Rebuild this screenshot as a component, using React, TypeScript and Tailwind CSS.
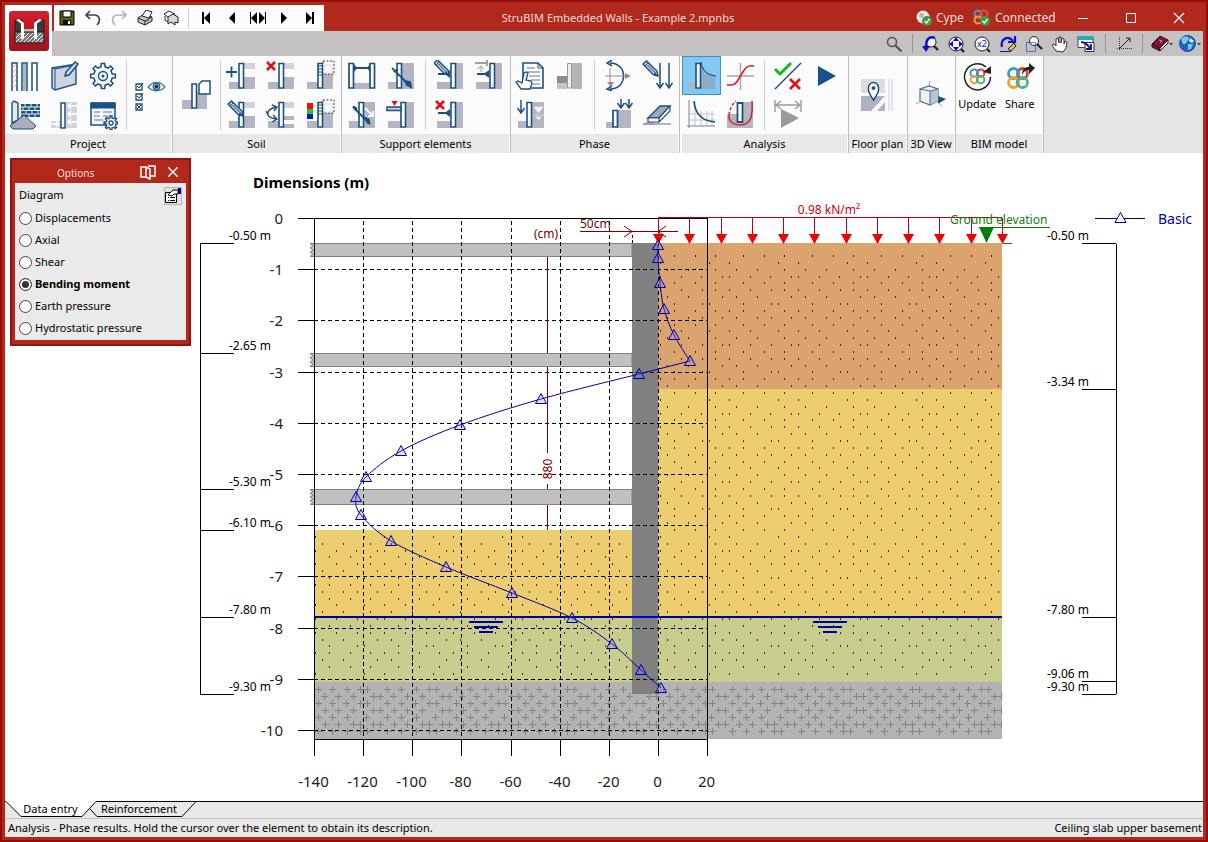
import { useState, type ReactNode } from 'react';
import { clsx } from 'clsx';

const NAVY = '#1c5080';
const GREY = '#b4b4c2';
const PALE = '#d2d2dc';
const RED = '#e01010';

/* ---------- drawing helpers ---------- */

function Icon({ children, className = 'size-[31px]', box = '0 0 31 31' }: { children: ReactNode; className?: string; box?: string }) {
  return (
    <svg viewBox={box} className={clsx('shrink-0', className)} fill="none" stroke={NAVY} aria-hidden="true">
      {children}
    </svg>
  );
}

function gearPath(cx: number, cy: number, outer: number, inner: number, teeth = 8) {
  const pts: string[] = [];
  const step = (Math.PI * 2) / teeth;
  for (let i = 0; i < teeth; i++) {
    const a = i * step - Math.PI / 2;
    const at = (r: number, off: number) =>
      `${(cx + r * Math.cos(a + off * step)).toFixed(2)} ${(cy + r * Math.sin(a + off * step)).toFixed(2)}`;
    pts.push(at(inner, -0.27), at(outer, -0.18), at(outer, 0.18), at(inner, 0.27));
  }
  return `M${pts.join('L')}Z`;
}

function Wall({ x = 13, banded = false }: { x?: number; banded?: boolean }) {
  return (
    <>
      <g stroke="none">
        <path d={`M3 22H${x}v7H3z`} fill={GREY} />
        <path d={`M${x + 5} 3H29v26H${x + 5}z`} fill={GREY} />
        {banded && <path d={`M${x + 5} 3H29v6H${x + 5}z`} fill={PALE} />}
        {banded && <path d={`M${x + 5} 9H29v8H${x + 5}z`} fill="#fff" />}
      </g>
      <path d={`M${x} 3.5h4.5V28H${x}z`} fill="#fff" strokeWidth="1.6" />
    </>
  );
}

function Pencil({ x = 2, y = 2 }: { x?: number; y?: number }) {
  return (
    <g transform={`translate(${x} ${y})`}>
      <path d="M0 3L3.500 0l10.500 10 1 5-5-1.500z" fill="#b9c9dc" strokeWidth="1.4" />
      <path d="M2 5l3.500-3.500M4.500 4l8 8" />
      <path d="M12 12l3 3-4-1z" fill={NAVY} />
    </g>
  );
}

function Cross({ x = 1, y = 1, s = 9 }: { x?: number; y?: number; s?: number }) {
  return <path d={`M${x} ${y}l${s} ${s}m0 ${-s}l${-s} ${s}`} stroke={RED} strokeWidth="2.6" />;
}

function DownArrow({ x, y, h }: { x: number; y: number; h: number }) {
  return <path d={`M${x} ${y}v${h}m-3.500-5l3.500 5 3.500-5`} strokeWidth="1.5" />;
}

function Rings() {
  return (
    <g strokeWidth="2.8">
      <circle cx="10.500" cy="10.500" r="5" stroke="#3b9ec4" />
      <circle cx="19.500" cy="10.500" r="5" stroke="#d8403a" />
      <circle cx="10.500" cy="19.500" r="5" stroke="#efa32c" />
      <circle cx="19.500" cy="19.500" r="5" stroke="#52b08a" />
      <path d="M14 7a5 5 0 0 1 1 6" stroke="#3b9ec4" />
      <path d="M16 23a5 5 0 0 1-1-6" stroke="#52b08a" />
    </g>
  );
}

/* ---------- ribbon ---------- */

type Tool = { name: string; art: ReactNode; on?: boolean };

const PROJECT: (Tool | null)[] = [
  {
    name: 'Wall types',
    art: (
      <>
        <path d="M3 31V3h5v28M13 31V3h5v28M23 31V3h5v28" fill="#fff" strokeWidth="1.500" />
        <path d="M3.500 8l4-4m-4 9l4-4m-4 9l4-4m-4 9l4-4m-4 9l4-4" stroke="#d79ab4" />
        <path d="M14 4h3v27h-3z" fill="#a9b8c8" stroke="none" />
      </>
    ),
  },
  {
    name: 'Description',
    art: (
      <>
        <path d="M4 8l24-4v20L7 30l-3-2z" fill="#cfd4e2" strokeWidth="1.400" />
        <path d="M4 8l3 1v20M7 9l21-4" />
        <path d="M27 2l3 2-9 11-4 1 1-4z" fill="#c7d8ea" strokeWidth="1.500" />
      </>
    ),
  },
  {
    name: 'General data',
    art: (
      <>
        <path d={gearPath(16, 16, 12.5, 9.5)} fill="#f2f4f8" strokeWidth="1.500" />
        <circle cx="16" cy="16" r="4.500" strokeWidth="1.400" />
        <circle cx="16" cy="16" r="1.500" fill={NAVY} stroke="none" />
      </>
    ),
  },
  {
    name: 'Materials',
    art: (
      <>
        <path d="M12 5h19v13H12z" fill={NAVY} stroke="none" />
        <path d="M12 8h19M12 11.500h19M12 15h19M16 5v3m6-3v3m6-3v3M14 8v3m6-3v3m6-3v3M17 12v3m6-3v3m6-3v3M20 15v3m6-3v3" stroke="#e8eef4" />
        <path d="M3 4l2-2 4 2v17l-6 3z" fill="#e4e8ee" strokeWidth="1.400" />
        <path d="M1 27L15 16l12 11-3 3H4z" fill="#a9adbd" />
      </>
    ),
  },
  {
    name: 'Earth pressures',
    art: (
      <>
        <path d="M3 22h10v7H3zM18 3h11v26H18z" fill={PALE} stroke="none" />
        <path d="M29 7h-9m3-3l-3 3 3 3M29 15h-9m3-3l-3 3 3 3M29 23h-9m3-3l-3 3 3 3M3 25h8m-3-3l3 3-3 3" stroke="#fff" strokeWidth="1.500" />
        <path d="M13 4h4v25h-4z" fill="#fff" strokeWidth="1.500" />
      </>
    ),
  },
  {
    name: 'Tables',
    art: (
      <>
        <path d="M4 4h24v22H4z" fill="#f4f4f8" strokeWidth="1.500" />
        <path d="M4 4h24v5H4z" fill={NAVY} />
        <path d="M7 13h6m3 0h9M7 17h6m3 0h6M7 21h9" stroke="#5c7f9f" />
        <path d={gearPath(24, 24, 7, 5)} fill="#fff" strokeWidth="1.400" />
        <circle cx="24" cy="24" r="2" strokeWidth="1.300" />
      </>
    ),
  },
];

const LAYER_BOX = (
  <>
    <path d="M19 1h11v13H19z" fill="#fff" stroke="#333" strokeDasharray="2 1.500" />
    <path d="M20 5h8v8h-8z" fill="#fff" stroke={PALE} />
    <path d="M14 6h4m-4 3h4m-4 3h4m-4 3h4" />
  </>
);

const SOIL: (Tool | null)[] = [
  { name: 'Add layer', art: <><Wall banded /><path d="M0 12h11M5.500 6.500v11" strokeWidth="1.800" /></> },
  { name: 'Delete layer', art: <><Wall x={14} banded /><Cross x={2} y={2} s={8} /></> },
  { name: 'Insert layer', art: <><Wall x={14} />{LAYER_BOX}</> },
  { name: 'Edit layer', art: <><Wall banded /><Pencil x={2} y={2} /></> },
  {
    name: 'Swap layers',
    art: (
      <>
        <Wall x={14} banded />
        <path d="M19 21h10v4H19z" fill="#fff" stroke="none" />
        <path d="M11 8C0 11 0 18 11 20M7 6l5 2-3 4M1 12l2 4M8 16l4 4-5 3" strokeWidth="1.400" />
      </>
    ),
  },
  {
    name: 'Layer colours',
    art: (
      <>
        <Wall x={14} />
        {LAYER_BOX}
        <g stroke="none">
          <path d="M3 4h6v6H3z" fill="#f01010" />
          <path d="M3 10h6v5H3z" fill="#10d020" />
          <path d="M3 15h6v5H3z" fill="#1010d0" />
        </g>
      </>
    ),
  },
];

const SUPPORT_A: (Tool | null)[] = [
  {
    name: 'Strut',
    art: (
      <>
        <path d="M7 23h18v6H7z" fill={GREY} stroke="none" />
        <path d="M3 3.500h4.500V28H3zM24 3.500h4.500V28H24z" fill="#fff" strokeWidth="1.700" />
        <path d="M8 8h16" strokeWidth="2" />
        <path d="M8 4l3 4-3 4zM24 4l-3 4 3 4z" fill={NAVY} stroke="none" />
      </>
    ),
  },
  { name: 'Anchor', art: <><Wall x={12} /><path d="M7 8l17 17" strokeWidth="1.800" /><path d="M9 12l4-3M20 21l5 1 1 5-4-2z" fill={NAVY} strokeWidth="2" /></> },
  {
    name: 'Passive anchor',
    art: <><Wall x={13} /><path d="M7 8l17 17" strokeWidth="2" /><path d="M7 7l4 2-1 3zM18 18l5 2 1 5-3-1z" fill={NAVY} /><path d="M19 9l8 8m0-5v5h-5" stroke="#fff" strokeWidth="1.800" /></>,
  },
  { name: 'Slab', art: <><Wall x={16} /><path d="M2 8h14v3.500H2z" fill="#c7ccd8" strokeWidth="1.500" /><path d="M6.500 2h6l-3 5z" fill={RED} stroke="none" /></> },
];

const STRUT_END = <><path d="M4 14h12" strokeWidth="2" /><path d="M12 13l4-3v8l-4-3z" fill={NAVY} stroke="none" /></>;

const SUPPORT_B: (Tool | null)[] = [
  { name: 'Edit support', art: <><Wall x={17} />{STRUT_END}<Pencil x={0} y={0} /></> },
  { name: 'Move support', art: <><Wall x={17} />{STRUT_END}<path d="M2 3h12M14 0v6" stroke="#a0a0a8" strokeWidth="2" /><path d="M8 12V6M5 9l3-3 3 3" stroke="#a0a0a8" /></> },
  { name: 'Delete support', art: <><Wall x={17} />{STRUT_END}<Cross x={2} y={2} s={8} /></> },
  null,
];

const PHASE_A: (Tool | null)[] = [
  {
    name: 'Phase manager',
    art: (
      <>
        <path d="M8 3h15l5 5v20H8z" fill="#fff" strokeWidth="1.600" />
        <path d="M23 3v5h5" />
        <path d="M12 8h8m-8 4h13m-11 4h11m-9 4h9m-8 4h8" stroke="#52779c" />
        <path d="M11 12l2 1-2 7 5 1 1 2-2 6H6l-5-7 2-1 4 2 2-10z" fill="#fff" strokeWidth="1.300" />
      </>
    ),
  },
  {
    name: 'Excavation',
    art: (
      <>
        <path d="M18 3h10v26H18z" fill="#b4b4b4" stroke="none" />
        <path d="M3 16h10v7H3z" fill="#8e8e8e" stroke="none" />
        <path d="M3 23h10v6H3z" fill="#c4c4c4" stroke="none" />
        <path d="M13.500 3.500h4V28h-4z" fill="#eee" stroke="#999" />
      </>
    ),
  },
  {
    name: 'Water level',
    art: <><Wall x={12} /><path d="M19 8h9l-4.500 6zM18 16h11M21 18h5l-2.500 3z" fill="#f4f4f8" stroke="#f4f4f8" strokeWidth=".5" /><DownArrow x={6} y={1} h={13} /></>,
  },
  null,
];

const PHASE_B: (Tool | null)[] = [
  {
    name: 'Loads on the wall',
    art: (
      <>
        <path d="M7 3c18 0 18 26 0 26M9 0L4 3l5 3M9 26l-5 3 5 2" strokeWidth="1.500" />
        <path d="M2 16h23M7 8v16" stroke="#8f8f98" />
        <path d="M28 16l-6-3v6zM8 27l-4-5h7z" fill="#8f8f98" stroke="none" />
      </>
    ),
  },
  { name: 'Edit load', art: <><Pencil x={1} y={1} /><DownArrow x={18} y={3} h={25} /><DownArrow x={27} y={3} h={25} /></> },
  {
    name: 'Surface load',
    art: (
      <>
        <path d="M15 11h13v18H15zM3 23h8v6H3z" fill={GREY} stroke="none" />
        <path d="M10 11.500h4.500V28H10z" fill="#fff" strokeWidth="1.700" />
        <DownArrow x={18} y={0} h={9} />
        <DownArrow x={26} y={0} h={9} />
      </>
    ),
  },
  {
    name: 'Delete load',
    art: (
      <>
        <path d="M1 26l3-3h8l3 3z" fill={GREY} stroke="none" />
        <path d="M1 25h28" stroke="#9c9cac" strokeWidth="1.500" />
        <path d="M6 19L18 7h10L17 19z" fill="#9daabb" strokeWidth="1.400" />
        <path d="M6 19h11v4H6zM17 19L28 7v5L17 23z" fill="#fff" strokeWidth="1.200" />
      </>
    ),
  },
];

const ANALYSIS_A: (Tool | null)[] = [
  {
    name: 'Phase results',
    on: true,
    art: (
      <>
        <path d="M15 7c3 6 8 9 14 9v13H15z" fill="#8fadc6" stroke="none" />
        <path d="M2 22h8v7H2z" fill="#9fb9cf" stroke="none" />
        <path d="M10 3.500h4.500V28H10z" fill="#eef6fc" strokeWidth="1.600" />
        <path d="M15 2c1 8 6 13 15 14" strokeWidth="1.200" />
      </>
    ),
  },
  { name: 'Behaviour curve', art: <><path d="M15.500 3v27M2 16h27" stroke="#a8a8a8" strokeWidth="1.500" /><path d="M2 25h4c6 0 7-6 10-10s4-9 9-9h4" stroke="#d81e2c" strokeWidth="1.700" /></> },
  {
    name: 'Envelopes',
    art: (
      <>
        <path d="M9 3v24M15 12v15M21 12v15M26 12v15M3 15h26M3 21h26" stroke="#c4c4cc" />
        <path d="M3 1v28M1 27h28" stroke="#808090" />
        <path d="M8 2c1 14 9 20 21 21" strokeWidth="1.600" />
      </>
    ),
  },
  {
    name: 'Overall stability',
    art: (
      <>
        <path d="M18 3h10v26H18zM2 15h10v14H2z" fill={GREY} stroke="none" />
        <path d="M12 20h6v9h-6z" fill={GREY} stroke="none" />
        <path d="M12.500 4h5v19h-5z" fill="#fff" strokeWidth="1.800" />
        <path d="M27 2c1 15-1 23-11 24C8 26 3 22 4 16" stroke="#d81e2c" strokeWidth="1.500" />
        <path d="M4 16C5 10 7 5 11 2" stroke="#d81e2c" strokeWidth="1.500" strokeDasharray="3 2" />
      </>
    ),
  },
];

const ANALYSIS_B: (Tool | null)[] = [
  {
    name: 'Checks',
    art: (
      <>
        <path d="M3 29L29 3" strokeWidth="1.500" />
        <path d="M3 9l5 5L19 3" stroke="#18b818" strokeWidth="3" />
        <Cross x={18} y={19} s={10} />
      </>
    ),
  },
  { name: 'Analyse', art: <path d="M7 6l18 10L7 26z" fill="#17508a" stroke="none" /> },
  {
    name: 'Analyse range',
    art: (
      <>
        <path d="M3 1v12M29 1v12M4 6h24M9 2L4 6l5 4M23 2l5 4-5 4" stroke="#9a9a9a" strokeWidth="1.400" />
        <path d="M9 10l18 9-18 10z" fill="#9a9a9a" stroke="none" />
      </>
    ),
  },
  null,
];

function ToolGrid({ tools, wide }: { tools: (Tool | null)[]; wide?: boolean }) {
  return (
    <div className={clsx('grid content-start', wide ? 'grid-cols-[repeat(3,39px)]' : 'grid-cols-[repeat(2,39px)]')}>
      {tools.map((t, i) =>
        t ? (
          <button
            key={t.name}
            aria-label={t.name}
            className={clsx(
              'flex size-[39px] items-center justify-center',
              t.on && 'bg-[#83c8f3] outline outline-1 -outline-offset-1 outline-[#3d8fc4]'
            )}
          >
            <Icon>{t.art}</Icon>
          </button>
        ) : (
          <span key={i} />
        )
      )}
    </div>
  );
}

function Group({ label, children, className }: { label: string; children: ReactNode; className: string }) {
  return (
    <section className={clsx('flex shrink-0 flex-col border-r border-[#bdbdbd]', className)}>
      <div className="flex h-[78px] justify-between pr-0.5">{children}</div>
      <h2 className="mr-px flex h-[19px] items-center justify-center whitespace-nowrap bg-[#e8e8e8] pt-px text-[11px]">{label}</h2>
    </section>
  );
}

const Divider = () => <span className="my-1 w-px shrink-0 bg-[#cfcfcf]" />;

function Ribbon() {
  return (
    <div className="flex bg-[#e6e6e6]">
      <div className="flex bg-[#fbfbfb]">
        <Group label="Project" className="w-[168px]">
          <ToolGrid tools={PROJECT} wide />
          <Divider />
          <button aria-label="Visible elements" className="flex w-[39px] items-center justify-center">
            <Icon className="size-[33px]" box="0 0 33 31">
              <path d="M2 4h6v6H2zM2 14h6v6H2zM2 24h6v6H2z" strokeWidth="1.300" />
              <path d="M3 6l2 2 4-5M3 16l2 2 4-5M3 25l4 4m0-4l-4 4" stroke="#333" />
              <path d="M14 7c5-6 12-6 17 0-5 5-12 5-17 0z" fill="#fff" stroke="#5a7a98" strokeWidth="1.300" />
              <circle cx="22.500" cy="6.500" r="3.500" fill="#7a98b4" stroke={NAVY} />
              <circle cx="22.500" cy="6.500" r="1.500" fill="#123" stroke="none" />
            </Icon>
          </button>
        </Group>
        <Group label="Soil" className="w-[169px]">
          <button aria-label="Import soil" className="flex w-[45px] items-center justify-center">
            <Icon>
              <path d="M2 20h10v9H2zM17 12h10v17H17z" fill={GREY} stroke="none" />
              <path d="M12 4h4.500v24H12z" fill="#fff" strokeWidth="1.600" />
              <path d="M22 1h8v13H19V4z" fill="#fff" strokeWidth="1.500" />
            </Icon>
          </button>
          <Divider />
          <ToolGrid tools={SOIL} wide />
        </Group>
        <Group label="Support elements" className="w-[169px]">
          <ToolGrid tools={SUPPORT_A} />
          <Divider />
          <ToolGrid tools={SUPPORT_B} />
        </Group>
        <Group label="Phase" className="w-[169px]">
          <ToolGrid tools={PHASE_A} />
          <Divider />
          <ToolGrid tools={PHASE_B} />
        </Group>
        <Group label="Analysis" className="w-[169px] pl-0.5">
          <ToolGrid tools={ANALYSIS_A} />
          <Divider />
          <ToolGrid tools={ANALYSIS_B} />
        </Group>
        <Group label="Floor plan" className="w-[59px]">
          <button aria-label="Floor plan" className="flex w-full items-center justify-center">
            <Icon className="size-8" box="0 0 32 32">
              <path d="M0 0h24v14H0z" fill="#dcdce2" stroke="none" />
              <path d="M27 0h2v32h-2zM30 0h2v32h-2z" fill="#e4e4e8" stroke="none" />
              <path d="M0 17h24L10 32H0zM16 32l8-9v9z" fill="#b0b0c4" stroke="none" />
              <path d="M12.500 21C8 14 7 12 7.500 8.500a5 5 0 0 1 10 0C18 12 17 14 12.500 21z" fill="#fff" strokeWidth="1.500" />
              <circle cx="12.500" cy="9" r="1.500" fill={NAVY} />
            </Icon>
          </button>
        </Group>
        <Group label="3D View" className="w-[48px]">
          <button aria-label="3D View" className="flex w-full items-center justify-center">
            <Icon>
              <path d="M23 16l8 3-8 5z" fill={NAVY} stroke="none" />
              <path d="M14.500 1v7M1 24l5-3M23 23l4 3" stroke="#a8a8a8" />
              <path d="M5 9l9-3 9 3v12l-8 4-10-4z" fill="#eef0f3" stroke="#55708c" strokeWidth="1.200" />
              <path d="M15 11l8-2v12l-8 4z" fill="#b9c4d2" stroke="none" />
              <path d="M5 9l10 2 8-2M15 11v14" stroke="#55708c" />
            </Icon>
          </button>
        </Group>
        <Group label="BIM model" className="w-[88px]">
          <button className="flex w-1/2 flex-col items-center gap-1 pt-[5px] text-[11px]">
            <Icon>
              <g transform="translate(4.500 4.500) scale(.73)"><Rings /></g>
              <path d="M24 6a13 13 0 1 0 4.500 10" stroke="#222" strokeWidth="1.500" />
              <path d="M29 5v8l-8-2z" fill="#222" stroke="none" />
            </Icon>
            Update
          </button>
          <button className="flex w-1/2 flex-col items-center gap-1 pt-[5px] text-[11px]">
            <Icon>
              <g transform="translate(-1 2)"><Rings /></g>
              <path d="M18 14c0-6 3-8 7-8V2l6 5-6 6V9c-3 0-5 1-7 5z" fill="#222" stroke="none" />
            </Icon>
            Share
          </button>
        </Group>
      </div>
    </div>
  );
}

/* ---------- title bar ---------- */

const QUICK: Tool[] = [
  { name: 'Save', art: <><path d="M1 1h14v14H1z" fill="#5e5e14" stroke="#000" /><path d="M4 1h8v6H4z" fill="#fff" stroke="#000" /><path d="M4 10h8v5H4z" fill="#111" stroke="none" /><path d="M9 11h2v3H9z" fill="#fff" stroke="none" /></> },
  { name: 'Undo', art: <path d="M5 1L1 5l4 4M1.500 5H9c6 0 7 6 3 10" stroke="#444" strokeWidth="1.700" /> },
  { name: 'Redo', art: <path d="M11 1l4 4-4 4M14.500 5H7c-6 0-7 6-3 10" stroke="#b4b4b4" strokeWidth="1.700" /> },
  { name: 'Print', art: <><path d="M1 8l6-4 8 3v4l-7 4-7-3z" fill="#c8c8c0" stroke="#222" /><path d="M5 6l4-6 6 2-3 6z" fill="#fff" stroke="#222" /><path d="M1 8l7 3 7-4M8 11v4" stroke="#222" /><path d="M10 11l2-1" stroke="#8a8a10" strokeWidth="2" /></> },
  { name: 'Export', art: <><path d="M1 4l5-3 6 3-6 4zM2 6v4l3 2" fill="#fff" stroke="#222" /><path d="M5 7l5-3 5 3v6l-3-1v3l-4-3-3 2z" fill="#d8d8d8" stroke="#222" /></> },
];

const NAV: Tool[] = [
  { name: 'First phase', art: <path d="M4 2h2v12H4zM12 2v12L6 8z" fill="#000" stroke="none" /> },
  { name: 'Previous phase', art: <path d="M11 2v12L5 8z" fill="#000" stroke="none" /> },
  { name: 'Select phase', art: <path d="M0 2h1v12H0zM7 2v12L1 8zM9 2v12l6-6zM15 2h1v12h-1z" fill="#000" stroke="none" /> },
  { name: 'Next phase', art: <path d="M5 2v12l6-6z" fill="#000" stroke="none" /> },
  { name: 'Last phase', art: <path d="M4 2v12l6-6zM10 2h2v12h-2z" fill="#000" stroke="none" /> },
];

const LENS = (
  <>
    <circle cx="9" cy="6" r="5" fill="#f6f6f6" stroke="#222" />
    <path d="M12 10l4 4" stroke="#222" strokeWidth="2.400" />
  </>
);

const VIEW: Tool[] = [
  { name: 'Previous zoom', art: <>{LENS}<path d="M13 2C6-1 4 5 4 12" stroke="#1010c8" strokeWidth="2.400" /><path d="M0 10h8l-4 6z" fill="#1010c8" stroke="none" /></> },
  { name: 'Zoom all', art: <><circle cx="8" cy="8" r="7" fill="#f6f6f6" stroke="#222" /><path d="M13 13l3 3" stroke="#222" strokeWidth="2.400" /><path d="M8 1l3 4H5zM8 15l3-4H5zM1 8l4-3v6zM15 8l-4-3v6z" fill="#1010c8" stroke="none" /></> },
  {
    name: 'Zoom x2',
    art: (
      <>
        <circle cx="8" cy="8" r="7" fill="#f6f6f6" stroke="#222" />
        <path d="M13 13l3 3" stroke="#222" strokeWidth="2" />
        <text x="3" y="11" fontSize="9" fill="#1010c8" stroke="none">x2</text>
      </>
    ),
  },
  { name: 'Redraw', art: <><path d="M2 11C0 3 8-1 13 5M15 0v6H8" stroke="#1010c8" strokeWidth="2.200" /><path d="M8 13l6-6 2 3-5 5z" fill="#d8c828" stroke="#222" /><path d="M0 15.500h11" stroke="#1010c8" /></> },
  { name: 'Zoom window', art: <><circle cx="8" cy="5" r="4.500" fill="#f6f6f6" stroke="#222" /><path d="M11 8l5 5" stroke="#222" strokeWidth="2.200" /><path d="M0.500 6.500h9v9h-9z" stroke="#1010c8" strokeDasharray="1 1" /></> },
  { name: 'Pan', art: <path d="M4 15L0 9l2-1 2 2V3l2-1 1 5V1h2v6l1-5 2 1v5l1-3 2 1-1 6-3 4z" fill="#fff" stroke="#333" /> },
  { name: 'Windows', art: <><path d="M0 .5h15v11H0z" fill="#fff" stroke="#444" /><path d="M0 0h15v4H0z" fill="#28a8b8" stroke="none" /><path d="M7 6.500h9v9H7z" fill="#fff" stroke="#333" /><path d="M3 6c4 0 6 2 9 6M13 8v5H8" stroke="#1010a0" strokeWidth="1.800" /></> },
];

function TitleBar() {
  return (
    <header className="flex">
      <div className="flex w-[47px] shrink-0 items-center justify-center bg-white">
        <svg viewBox="0 0 40 40" className="size-10" aria-label="StruBIM" role="img">
          <defs>
            <linearGradient id="logo" x1="0" y1="0" x2="0" y2="1">
              <stop offset="0" stopColor="#d3202c" />
              <stop offset="1" stopColor="#a3131e" />
            </linearGradient>
          </defs>
          <rect width="40" height="40" rx="3" fill="url(#logo)" />
          <path d="M6 9h7v12H6zM27 9h8v12h-8z" fill="#3c3a3a" stroke="#222" />
          <path d="M15 18h10v4H15z" fill="#bdbdbd" />
          <path d="M6 21h29v11H6z" fill="#777" stroke="#222" />
          <path d="M7 27l5-5M7 31l9-9M11 31l9-9M15 31l9-9M19 31l9-9M23 31l9-9M27 31l7-7M31 31l3-3" stroke="#f4f4f4" />
          <path d="M10 8l5 4v16h-3V12.500L7 9zM30 8l-5 4v16h3V12.500l5-3.500z" fill="#fff" />
        </svg>
      </div>
      <div className="flex min-w-0 flex-1 flex-col">
        <div className="flex h-[26px] items-stretch bg-[#b1281d] text-[#f6dcd8]">
          <div className="ml-0.5 flex w-[270px] shrink-0 items-center bg-[#fcfcfc]">
            {QUICK.map((t) => (
              <button key={t.name} aria-label={t.name} className="flex w-[26px] justify-center">
                <Icon className="size-4" box="0 0 16 16">{t.art}</Icon>
              </button>
            ))}
            <span className="mx-1 h-[22px] w-px bg-[#cfcfcf]" />
            {NAV.map((t) => (
              <button key={t.name} aria-label={t.name} className="flex w-[26px] justify-center">
                <Icon className="size-4" box="0 0 16 16">{t.art}</Icon>
              </button>
            ))}
          </div>
          <h1 className="flex min-w-0 flex-1 items-center justify-center whitespace-nowrap text-[11px]">
            StruBIM Embedded Walls - Example 2.mpnbs
          </h1>
          <button className="flex w-[58px] items-center gap-1 pl-1 text-xs">
            <Icon className="size-4" box="0 0 16 16">
              <circle cx="7" cy="7" r="6.500" fill="#e6e8e6" stroke="none" />
              <path d="M4 3l4 1-1 4-4-1z" fill="#b0b8b0" stroke="none" />
              <circle cx="11" cy="11" r="5" fill="#3c9a48" stroke="none" />
              <path d="M8.500 11l2 2 3-4" stroke="#fff" strokeWidth="1.300" />
            </Icon>
            Cype
          </button>
          <button className="flex w-[89px] items-center gap-1 pl-[3px] text-xs">
            <Icon className="size-[18px]" box="0 0 18 18">
              <circle cx="5" cy="5" r="3.500" stroke="#4a9abf" strokeWidth="2" />
              <circle cx="11" cy="5" r="3.500" stroke="#d8503c" strokeWidth="2" />
              <circle cx="5" cy="11" r="3.500" stroke="#e89a3c" strokeWidth="2" />
              <circle cx="12" cy="12" r="5" fill="#3c9a48" stroke="none" />
              <path d="M9.500 12l2 2 3-4" stroke="#fff" strokeWidth="1.300" />
            </Icon>
            Connected
          </button>
          <button aria-label="Minimise" className="flex w-12 items-center justify-center">
            <Icon className="size-3" box="0 0 12 12"><path d="M1 6.500h10" stroke="#fff" /></Icon>
          </button>
          <button aria-label="Maximise" className="flex w-12 items-center justify-center">
            <Icon className="size-3" box="0 0 12 12"><path d="M1.500 1.500h9v9h-9z" stroke="#fff" /></Icon>
          </button>
          <button aria-label="Close" className="flex w-12 items-center justify-center">
            <Icon className="size-3" box="0 0 12 12"><path d="M1 1l10 10M11 1L1 11" stroke="#fff" strokeWidth="1.300" /></Icon>
          </button>
        </div>
        <div className="flex h-[25px] items-center justify-end bg-[#c3c1c1]">
          <button aria-label="Search" className="mr-2.5 flex">
            <Icon className="size-4" box="0 0 16 16">
              <circle cx="6" cy="6" r="4.500" stroke="#555" strokeWidth="1.600" />
              <path d="M9.500 9.500l6 6" stroke="#555" strokeWidth="2.200" />
            </Icon>
          </button>
          <span className="mr-1 h-[19px] w-px bg-[#959595]" />
          {VIEW.map((t) => (
            <button key={t.name} aria-label={t.name} className="flex w-[26px] justify-center">
              <Icon className="size-[18px]" box="-1 -1 18 18">{t.art}</Icon>
            </button>
          ))}
          <span className="ml-1.5 h-[19px] w-px bg-[#959595]" />
          <button aria-label="Axes" className="flex w-9 justify-center">
            <Icon className="size-4" box="0 0 16 16">
              <path d="M3.500 1v14M1 12.500h15" stroke="#333" strokeDasharray="1 1" />
              <path d="M3 13L14 2M14 6V2h-4" stroke="#222" />
            </Icon>
          </button>
          <span className="mr-2 h-[19px] w-px bg-[#959595]" />
          <button aria-label="Help" className="flex w-7 items-center">
            <Icon className="w-[22px]" box="0 0 22 17">
              <path d="M1 9l8-8 8 4-8 8z" fill="#7c1440" stroke="#3c0820" />
              <path d="M1 9v3l8 4v-3z" fill="#7c1440" stroke="#3c0820" />
              <path d="M9 13v3l8-8V5z" fill="#eee" stroke="#3c0820" />
              <path d="M8 5l3 1-2 2" stroke="#f0a020" />
              <path d="M18 8h4l-2 2.500z" fill="#444" stroke="none" />
            </Icon>
          </button>
          <button aria-label="Web" className="mr-0.5 flex items-center">
            <Icon className="w-[22px]" box="0 0 22 17">
              <circle cx="8.500" cy="8.500" r="8" fill="#1d63c8" stroke="#174c9c" />
              <path d="M2 4c3-3 6-3 8-1L8 7 6 9l-2 0zM9 9l5 0-2 5-3 1z" fill="#7cc8f4" stroke="none" />
              <path d="M11 3l4 3-2 2-3-2z" fill="#d8f0fc" stroke="none" />
              <path d="M18 8h4l-2 2.500z" fill="#444" stroke="none" />
            </Icon>
          </button>
        </div>
      </div>
    </header>
  );
}

/* ---------- section drawing ---------- */

// 51.2 units per metre of depth, 2.4563 units per kN·m, kept on half units for sharp lines
const yAt = (m: number) => Math.floor(218.5 + m * 51.2) + 0.5;
const xAt = (v: number) => Math.floor(658.4 + v * 2.4563) + 0.5;

const DEPTHS = [0, 1, 2, 3, 4, 5, 6, 7, 8, 9, 10];
const MOMENTS = [-140, -120, -100, -80, -60, -40, -20, 0, 20];

const CURVE: [number, number][] = [
  [658, 245], [658, 258], [660, 283], [664, 309], [674, 335], [690, 361],
  [639, 374], [541, 399], [460, 425], [401, 451], [366, 477], [356, 497], [361, 515],
  [391, 541], [446, 567], [512, 593], [572, 618], [612, 644], [641, 670], [661, 688],
];

// dot columns for each row of the soil hatch
const DOT_ROWS = [
  [15, 43, 64], [9, 29], [15, 36, 57], [1, 22, 29, 50], [15, 43, 64],
  [2, 15, 29, 50], [22, 36, 57], [2, 9, 43], [15, 29, 43, 64], [2, 22, 36, 57],
  [15, 43, 64], [9, 29, 50], [15, 36, 57], [2, 22, 29, 50], [15, 43, 64],
  [2, 15, 29, 50], [22, 36, 57], [2, 9, 43], [15, 29, 43, 64], [22, 36, 57],
];

const PLUS_ROWS = [
  [5, 18, 25, 45, 59], [11, 31, 38, 51, 65], [4, 18, 25, 45, 59],
  [11, 31, 38, 52, 65], [5, 24, 45, 59], [11, 18, 31, 38, 52, 65],
];

const LEFT_MARKS: [string, number][] = [
  ['-0.50 m', 243], ['-2.65 m', 353], ['-5.30 m', 489], ['-6.10 m', 530], ['-7.80 m', 617], ['-9.30 m', 694],
];
const RIGHT_MARKS: [string, number][] = [
  ['-0.50 m', 243], ['-3.34 m', 389], ['-7.80 m', 617], ['-9.06 m', 681], ['-9.30 m', 694],
];

// rounds each branch; the sharp corner at the second slab stays a corner
function smooth(p: [number, number][]) {
  let d = `M${p[0].join(' ')}`;
  for (let i = 0; i < p.length - 1; i++) {
    const a = p[i - 1] ?? p[i];
    const b = p[i];
    const c = p[i + 1];
    const e = p[i + 2] ?? c;
    d += `C${b[0] + (c[0] - a[0]) / 6} ${b[1] + (c[1] - a[1]) / 6} ${c[0] - (e[0] - b[0]) / 6} ${c[1] - (e[1] - b[1]) / 6} ${c[0]} ${c[1]}`;
  }
  return d;
}

const triangle = (x: number, y: number) => `M${x - 5.5} ${y + 4.5}h11l-5.500-10z`;

function Slab({ top, bottom }: { top: number; bottom: number }) {
  const teeth = Math.round((bottom - top) / 4);
  const h = (bottom - top) / teeth;
  return (
    <>
      <path d={`M314 ${bottom}H632V${top}H314`} fill="#c0c0c0" stroke="#808080" />
      <path
        d={`M314 ${top}h-4${Array.from({ length: teeth }, () => `l3 ${h / 2}l-3 ${h / 2}`).join('')}H314`}
        fill="#c0c0c0"
        stroke="#808080"
      />
    </>
  );
}

function WaterMark({ x }: { x: number }) {
  return <path d={`M${x - 17} 622h34M${x - 12} 627h24M${x - 7} 632h14`} stroke="#0000a0" strokeWidth="2" />;
}

function Section() {
  return (
    <svg viewBox="5 153 1198 647" className="block h-auto w-full" fill="none" role="img" aria-label="Bending moment diagram">
      <defs>
        <pattern id="dots" patternUnits="userSpaceOnUse" x="700" y="255" width="69" height="137">
          {DOT_ROWS.map((row, r) =>
            row.map((x) => <rect key={`${r}-${x}`} x={x} y={Math.round(r * 6.85)} width="1" height="2" fill="#5a2a08" />)
          )}
        </pattern>
        <pattern id="plus" patternUnits="userSpaceOnUse" x="480" y="686" width="69" height="42">
          {PLUS_ROWS.map((row, r) =>
            row.map((x) => <path key={`${r}-${x}`} d={`M${x - 3} ${r * 7 + 3.5}h7M${x + 0.5} ${r * 7}v7`} stroke="#858585" />)
          )}
        </pattern>
      </defs>

      {/* soil layers */}
      <path d="M658 243h344v146H658z" fill="#dba46e" />
      <path d="M658 389h344v228H658zM314 530h318v87H314z" fill="#ecce70" />
      <path d="M658 617h344v65H658zM314 617h318v65H314z" fill="#c8cc8c" />
      <path d="M314 682h688v57H314z" fill="#b3b3b3" />
      <path d="M658 250h344v430H658zM314 534h318v146H314z" fill="url(#dots)" />
      <path d="M314 686h688v49H314z" fill="url(#plus)" />

      <Slab top={243.5} bottom={256.5} />
      <Slab top={353.5} bottom={366.5} />
      <Slab top={489.5} bottom={504.5} />

      <path d="M632 243h26v451h-26z" fill="#808080" />
      <path d="M314 617h688" stroke="#0000a0" strokeWidth="2" />
      <path d="M632 617h26" stroke="#0000e0" strokeWidth="2" />
      <WaterMark x={486} />
      <WaterMark x={830} />

      {/* grid and axes */}
      <g stroke="#000" shapeRendering="crispEdges">
        {DEPTHS.map((m) => (
          <path key={m} d={`M298 ${yAt(m)}h16`} />
        ))}
        {DEPTHS.slice(1).map((m) => (
          <path key={m} d={`M314 ${yAt(m)}H707`} strokeDasharray="4 3" />
        ))}
        {MOMENTS.map((v) => (
          <path key={v} d={`M${xAt(v)} 739v17`} />
        ))}
        {MOMENTS.slice(1, -1).map((v) => (
          <path key={v} d={`M${xAt(v)} 221V739`} strokeDasharray="4 3" />
        ))}
        <path d="M314.500 218.500h393v521h-393z" />
        <path d="M632.500 235v8" strokeDasharray="3 2" />
      </g>
      <g fontSize="15" fill="#222">
        {DEPTHS.map((m) => (
          <text key={m} x="283" y={yAt(m) + 5} textAnchor="end">{m ? `-${m}` : '0'}</text>
        ))}
        {MOMENTS.map((v) => (
          <text key={v} x={xAt(v) - 1} y="787" textAnchor="middle">{v}</text>
        ))}
      </g>
      <text x="253" y="188" fontSize="15" fontWeight="700" fill="#000">Dimensions (m)</text>

      {/* elevation marks */}
      <g stroke="#000" shapeRendering="crispEdges">
        <path d="M200.500 243.500V694M1116.500 243.500V694" />
        {LEFT_MARKS.map(([t, y]) => <path key={t} d={`M200 ${y + 0.5}h34`} />)}
        {RIGHT_MARKS.map(([t, y]) => <path key={t} d={`M1082 ${y + 0.5}h34`} />)}
      </g>
      <g fontSize="12" fill="#000">
        {LEFT_MARKS.map(([t, y]) => <text key={t} x="271" y={y - 3} textAnchor="end">{t}</text>)}
        {RIGHT_MARKS.map(([t, y]) => <text key={t} x="1089" y={y - 3} textAnchor="end">{t}</text>)}
      </g>

      {/* dimension lines */}
      <path
        d="M547.500 257v96M547.500 367v86M547.500 484v5M547.500 505v25M580 231.500h98M624 226l8 5.500-8 5.500M666 226l-8 5.500 8 5.500"
        stroke="#800000"
      />
      <g fill="#800000" fontSize="12">
        <text x="580" y="228">50cm</text>
        <text x="534" y="238">(cm)</text>
        <text x="552" y="469" textAnchor="middle" transform="rotate(-90 552 469)">880</text>
      </g>

      {/* surcharge */}
      <path d="M658 217.500h344" stroke="#c00010" />
      {Array.from({ length: 12 }, (_, i) => Math.round(658 + i * 31.25)).map((x) => (
        <g key={x}>
          <path d={`M${x + 0.5} 218v17`} stroke="#c00010" />
          <path d={`M${x - 5} 234h11l-5.500 10z`} fill="#f00000" />
        </g>
      ))}
      <text x="829" y="214" fontSize="12" textAnchor="middle" fill="#d00010">0.98 kN/m²</text>

      <text x="950" y="224" fontSize="12" fill="#108010">Ground elevation</text>
      <path d="M979 227.500h71M1003 243.500h9" stroke="#008000" />
      <path d="M979 227h15l-7.500 16z" fill="#008000" />

      {/* bending moment */}
      <g stroke="#0000a8">
        <path d={smooth(CURVE.slice(0, 6))} />
        <path d="M690 361L639 374" />
        <path d={smooth(CURVE.slice(6))} />
        {CURVE.map(([x, y]) => (
          <path key={y} d={triangle(x, y)} fill="#8080ff" fillOpacity=".25" />
        ))}
        <path d="M1095 218.500h50" />
        <path d={triangle(1120.5, 218)} fill="#fff" />
      </g>
      <text x="1158" y="224" fontSize="14" fill="#0000a8">Basic</text>
    </svg>
  );
}

/* ---------- options window ---------- */

const DIAGRAMS = ['Displacements', 'Axial', 'Shear', 'Bending moment', 'Earth pressure', 'Hydrostatic pressure'];

function OptionsPanel() {
  const [diagram, setDiagram] = useState('Bending moment');

  return (
    <div className="absolute left-[5px] top-[5px] w-[181px] border-2 border-[#941410] bg-[#b1281d] px-[3px] pb-1">
      <div className="flex h-[23px] items-center text-[#f8dcd8]">
        <span className="flex-1 pl-[42px] pt-1 text-[10px]">Options</span>
        <button aria-label="Dock" className="mr-3 flex">
          <Icon className="size-4" box="0 0 16 16">
            <path d="M1 3h5v10H1zM6 3l4 2v10l-4-2M8 2h7v10h-4" stroke="#fff" strokeWidth="1.500" />
          </Icon>
        </button>
        <button aria-label="Close options" className="mr-2 flex">
          <Icon className="size-2.5" box="0 0 10 10"><path d="M0 0l10 10M10 0L0 10" stroke="#fff" strokeWidth="1.400" /></Icon>
        </button>
      </div>
      <fieldset className="bg-[#eaeaea] px-1 pb-px pt-px text-[11px]">
        <div className="flex h-[23px] items-center justify-between">
          <span>Diagram</span>
          <button aria-label="Diagram settings" className="flex size-[18px] items-center justify-center border border-[#bbb] bg-[#e0e0e0]">
            <Icon className="size-4" box="0 0 16 16">
              <path d="M.5 4.500h11v10H.5z" fill="#fff" stroke="#000" />
              <path d="M3 9.500h1m1 0h5m-7 3h1m1 0h5" stroke="#000" />
              <path d="M3 7l5-5h5v4H9L7 8z" fill="#fff" stroke="#000" />
              <path d="M13 0h3v6h-3z" fill="#000080" stroke="none" />
            </Icon>
          </button>
        </div>
        {DIAGRAMS.map((d) => (
          <label key={d} className={clsx('flex h-[22px] items-center gap-[3px]', d === diagram && 'font-bold')}>
            <input
              type="radio"
              name="diagram"
              checked={d === diagram}
              onChange={() => setDiagram(d)}
              className="size-[13px] appearance-none rounded-full border border-[#444] bg-white checked:bg-[#333] checked:shadow-[inset_0_0_0_2px_white]"
            />
            {d}
          </label>
        ))}
      </fieldset>
    </div>
  );
}

export default function App() {
  return (
    <div className="flex min-h-screen flex-col border-2 border-[#980c08] bg-[#b1281d] p-[3px] font-['Noto_Sans','Open_Sans',sans-serif] text-black">
      <TitleBar />
      <Ribbon />
      <main className="relative flex-1 bg-white">
        <Section />
        <OptionsPanel />
      </main>
      <footer className="bg-[#e9e9e9] text-[11px]">
        <nav className="flex h-[17px]">
          <div className="relative flex w-[191px] shrink-0">
            <svg viewBox="0 0 191 17" className="absolute inset-0" fill="none" stroke="#000" aria-hidden="true">
              <path d="M0 0l16 15.500h61L91 .5V0z" fill="#fff" stroke="none" />
              <path d="M0 .5h1L16 15.500h61L91 .5h100L177 15.500H92L85 8" />
            </svg>
            <button className="relative w-[91px]">Data entry</button>
            <button className="relative w-[86px]">Reinforcement</button>
          </div>
          <span className="flex-1 border-t border-black" />
        </nav>
        <div className="flex h-[19px] items-center justify-between border-t border-[#c4c4c4] pl-[3px] pr-px">
          <span>Analysis - Phase results. Hold the cursor over the element to obtain its description.</span>
          <span>Ceiling slab upper basement</span>
        </div>
      </footer>
    </div>
  );
}
